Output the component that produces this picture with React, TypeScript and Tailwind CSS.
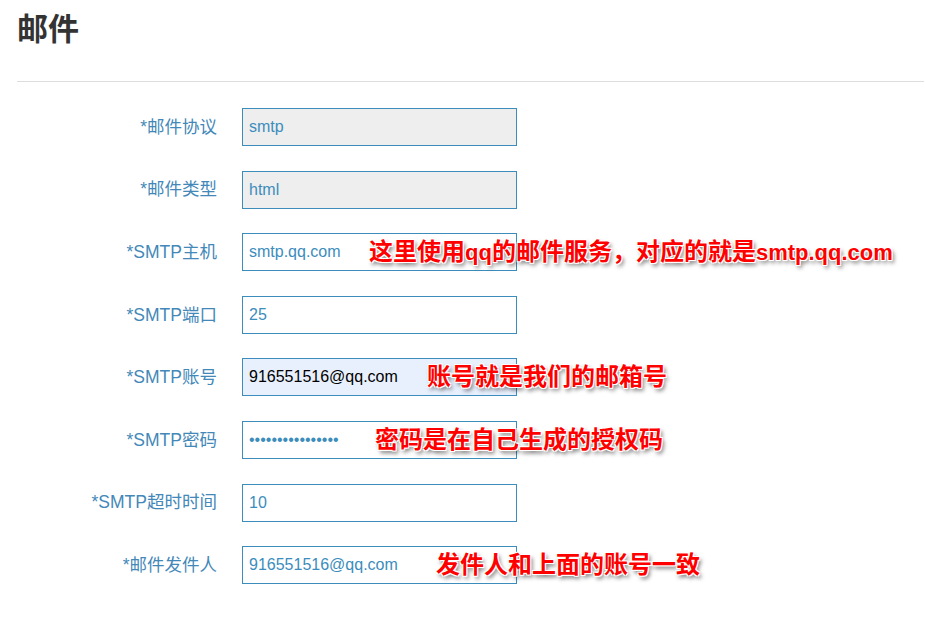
import React from "react";

const fields = [
  { label: "*邮件协议", value: "smtp", disabled: true },
  { label: "*邮件类型", value: "html", disabled: true },
  { label: "*SMTP主机", value: "smtp.qq.com", note: "这里使用qq的邮件服务，对应的就是smtp.qq.com", noteX: 369 },
  { label: "*SMTP端口", value: "25" },
  { label: "*SMTP账号", value: "916551516@qq.com", autofill: true, note: "账号就是我们的邮箱号", noteX: 427 },
  { label: "*SMTP密码", value: "1234567890123456", password: true, note: "密码是在自己生成的授权码", noteX: 375 },
  { label: "*SMTP超时时间", value: "10" },
  { label: "*邮件发件人", value: "916551516@qq.com", note: "发件人和上面的账号一致", noteX: 436 },
];

// latin runs in the notes render a bit narrower than the CJK ones
const Note = ({ text }: { text: string }) => (
  <>
    {text.split(/([A-Za-z.]+)/).map((part, i) =>
      /^[A-Za-z.]+$/.test(part) ? (
        <span key={i} className="text-[22px]">
          {part}
        </span>
      ) : (
        <React.Fragment key={i}>{part}</React.Fragment>
      )
    )}
  </>
);

const Row = ({ f }: { f: (typeof fields)[number] }) => {
  let inputCls =
    "h-[38px] w-[275px] border border-[#3c8dbc] px-[6px] text-[16px] outline-none font-['Liberation_Sans','Noto_Sans_CJK_SC',sans-serif] ";
  if (f.disabled) inputCls += "bg-[#eeeeee] text-[#3c8dbc]";
  else if (f.autofill) inputCls += "bg-[#e8f0fe] text-black";
  else inputCls += "bg-white text-[#3c8dbc]";

  return (
    <div className="relative flex items-center h-[38px]">
      <label className="w-[200px] text-right text-[17.5px] text-[#4388b8] font-['Liberation_Sans','Noto_Sans_CJK_SC',sans-serif]">
        {f.label}
      </label>
      <input
        className={inputCls + " ml-[25px]"}
        type={f.password ? "password" : "text"}
        value={f.value}
        readOnly
      />
      {f.note && (
        <span
          className="absolute top-1/2 -translate-y-1/2 whitespace-nowrap text-[24px] font-bold text-[#ff0000] font-['Liberation_Sans','Noto_Sans_CJK_SC',sans-serif] [text-shadow:1px_1px_0_#fff,-1px_-1px_0_#fff,1px_-1px_0_#fff,-1px_1px_0_#fff,2px_3px_4px_rgba(0,0,0,0.6)]"
          style={{ left: f.noteX! - 17 }}
        >
          <Note text={f.note} />
        </span>
      )}
    </div>
  );
};

export default function App() {
  return (
    <div className="min-h-screen bg-white pl-[17px] pr-[1px] pt-[13px] font-['Liberation_Sans','Noto_Sans_CJK_SC',sans-serif]">
      <h1 className="text-[31px] leading-[34px] font-bold text-[#333]">邮件</h1>
      <div className="mt-[34px] h-px bg-[#dddddd]" />
      <div className="mt-[26px] flex flex-col gap-[24.6px]">
        {fields.map((f) => (
          <Row key={f.label} f={f} />
        ))}
      </div>
    </div>
  );
}
